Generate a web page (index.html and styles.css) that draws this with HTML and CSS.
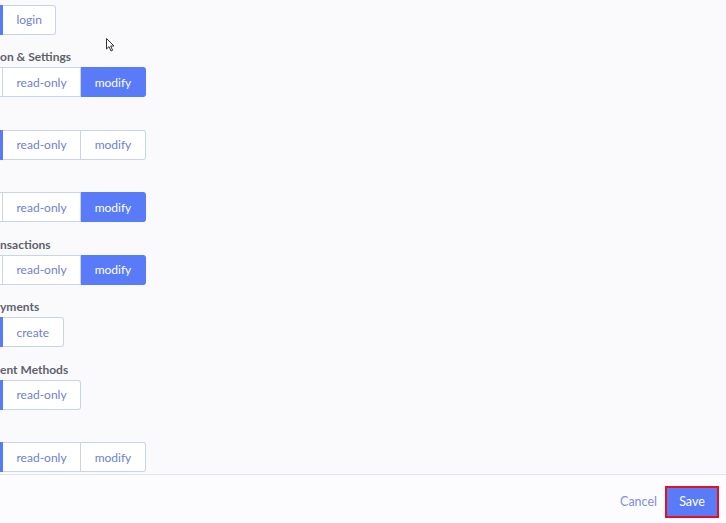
FILE: index.html
```html
<!DOCTYPE html>
<html lang="en">
<head>
<meta charset="utf-8">
<title>Permissions</title>
<link rel="stylesheet" href="styles.css">
</head>
<body>
<div class="page">
  <main class="content">
    <section class="group">
      <div class="label"></div>
      <div class="options">
        <button class="opt lead on" aria-label="none"></button>
        <button class="opt">login</button>
      </div>
    </section>
    <section class="group">
      <div class="label">on &amp; Settings</div>
      <div class="options">
        <button class="opt lead" aria-label="none"></button>
        <button class="opt">read-only</button>
        <button class="opt on">modify</button>
      </div>
    </section>
    <section class="group">
      <div class="label"></div>
      <div class="options">
        <button class="opt lead on" aria-label="none"></button>
        <button class="opt">read-only</button>
        <button class="opt">modify</button>
      </div>
    </section>
    <section class="group">
      <div class="label"></div>
      <div class="options">
        <button class="opt lead" aria-label="none"></button>
        <button class="opt">read-only</button>
        <button class="opt on">modify</button>
      </div>
    </section>
    <section class="group">
      <div class="label">nsactions</div>
      <div class="options">
        <button class="opt lead" aria-label="none"></button>
        <button class="opt">read-only</button>
        <button class="opt on">modify</button>
      </div>
    </section>
    <section class="group">
      <div class="label">yments</div>
      <div class="options">
        <button class="opt lead on" aria-label="none"></button>
        <button class="opt">create</button>
      </div>
    </section>
    <section class="group">
      <div class="label">ent Methods</div>
      <div class="options">
        <button class="opt lead on" aria-label="none"></button>
        <button class="opt">read-only</button>
      </div>
    </section>
    <section class="group">
      <div class="label"></div>
      <div class="options">
        <button class="opt lead on" aria-label="none"></button>
        <button class="opt">read-only</button>
        <button class="opt">modify</button>
      </div>
    </section>
  </main>
  <footer class="footer">
    <button class="cancel">Cancel</button>
    <button class="save">Save</button>
  </footer>
  <svg class="cursor" width="10" height="15" viewBox="0 0 10 15" aria-hidden="true">
    <path d="M0.5 0.5 L0.5 11 L3 8.6 L5 13 L6.6 12.3 L4.7 8 L8 8 Z" fill="#fff" stroke="#333" stroke-width="1" stroke-linejoin="round"/>
  </svg>
</div>
</body>
</html>
```
FILE: styles.css
```css
* { box-sizing: border-box; }
html, body {
  margin: 0;
  padding: 0;
  width: 726px;
  height: 523px;
  overflow: hidden;
  background: #fafafd;
  font-family: "Lato", "Open Sans", sans-serif;
}
.page {
  position: relative;
  height: 523px;
  display: flex;
  flex-direction: column;
}
.content {
  flex: 1;
  min-height: 0;
  overflow: hidden;
  display: flex;
  flex-direction: column;
}
.group {
  display: flex;
  flex-direction: column;
  flex-shrink: 0;
  margin-bottom: 14.5px;
}
.group:first-child { margin-top: -13.5px; }
.label {
  height: 16px;
  line-height: 16px;
  font-size: 12px;
  font-weight: 700;
  color: #5d616c;
  margin-bottom: 2px;
  white-space: nowrap;
}
.options {
  display: flex;
  height: 30px;
}
.opt {
  font-family: inherit;
  font-size: 12px;
  color: #6f80d6;
  background: #fff;
  border: 1px solid #c9d3ea;
  border-left-width: 0;
  padding: 0 13.5px;
  height: 30px;
  margin: 0;
  cursor: pointer;
}
.opt:last-child { border-radius: 0 3px 3px 0; }
.opt.lead {
  width: 40px;
  padding: 0;
  margin-left: -37px;
  border-left-width: 1px;
}
.opt.on {
  background: #5a7bf8;
  border-color: #5a7bf8;
  color: #fff;
}
.footer {
  flex-shrink: 0;
  height: 49px;
  border-top: 1px solid #e4e5ec;
  background: #fcfcfe;
  display: flex;
  align-items: center;
  justify-content: flex-end;
  gap: 8px;
  padding: 0 7px 0 0;
}
.cancel {
  font-family: inherit;
  font-size: 12.5px;
  color: #7d8edd;
  background: none;
  border: 0;
  padding: 0;
  margin-top: 4px;
}
.save {
  font-family: inherit;
  font-size: 12.5px;
  color: #fff;
  background: #5a7bf8;
  border: 2px solid #e8101e;
  width: 54px;
  height: 32px;
  margin-top: 5px;
  padding: 0;
}
.cursor {
  position: absolute;
  left: 106px;
  top: 38px;
}
```
